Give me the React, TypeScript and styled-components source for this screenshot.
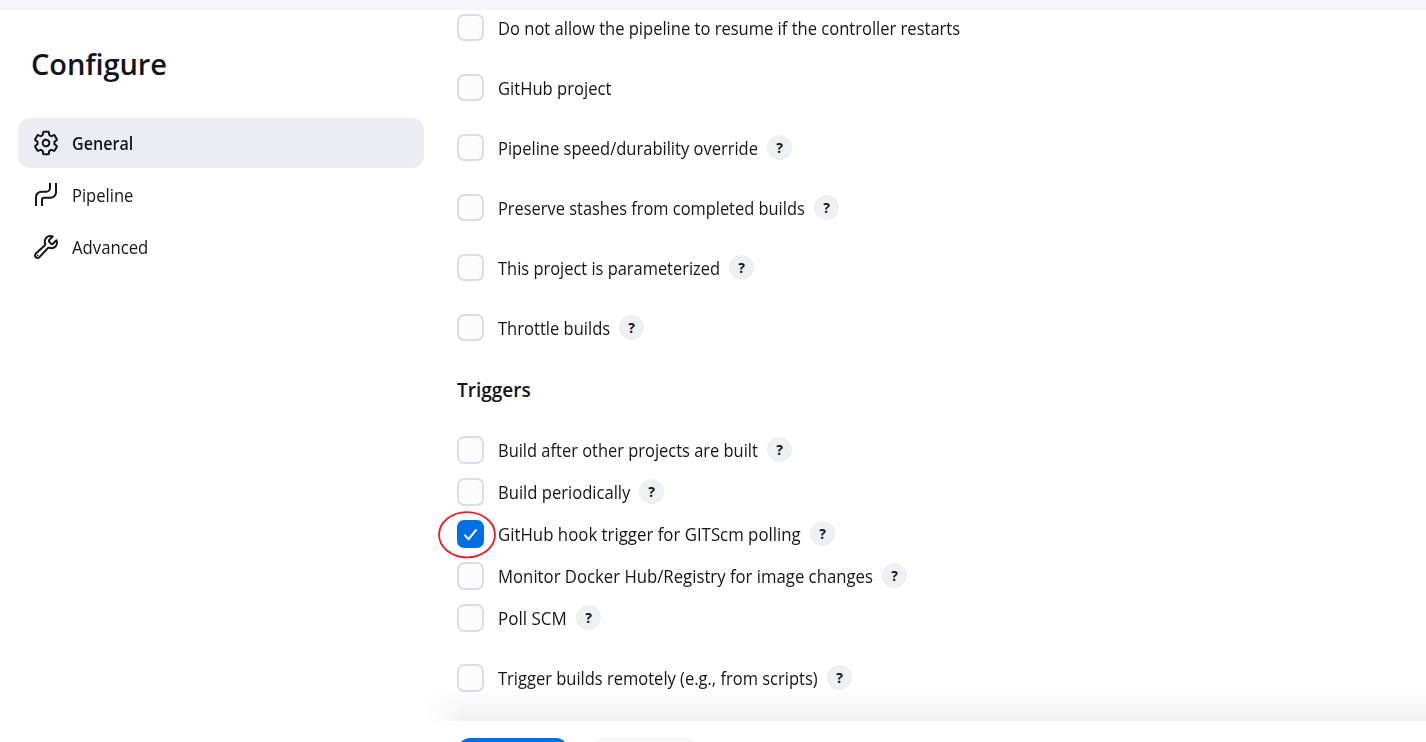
import React from "react";
import styled, { createGlobalStyle } from "styled-components";
import { IoSettingsOutline, IoBuildOutline } from "react-icons/io5";

const GlobalStyle = createGlobalStyle`
  * { box-sizing: border-box; }
  body {
    margin: 0;
    background: #fff;
    color: #14141f;
    font-family: "Segoe UI", "Open Sans", "Noto Sans", sans-serif;
    font-size: 17.6px;
    overflow: hidden;
  }
`;

const Page = styled.div`
  position: relative;
  height: 742px;
  overflow: hidden;
  display: flex;
  flex-direction: column;
`;

const TopBar = styled.div`
  flex: none;
  height: 10px;
  background: #f5f5f8;
`;

const Columns = styled.div`
  flex: 1;
  min-height: 0;
  display: flex;
`;

const Sidebar = styled.aside`
  width: 424px;
  padding: 34px 0 0 18px;
`;

const Title = styled.h1`
  margin: 0 0 34px 13px;
  font-size: 29px;
  line-height: 40px;
  font-weight: 600;
  letter-spacing: -0.1px;
`;

const Nav = styled.nav`
  display: flex;
  flex-direction: column;
  gap: 2px;
`;

const NavItem = styled.a<{ $active?: boolean }>`
  display: flex;
  align-items: center;
  gap: 12px;
  height: 50px;
  padding: 0 14px;
  border-radius: 12px;
  background: ${(p) => (p.$active ? "#ecedf3" : "transparent")};
  font-weight: ${(p) => (p.$active ? 600 : 400)};

  svg {
    flex: none;
    width: 28px;
    height: 28px;
  }
`;

const GearIcon = styled(IoSettingsOutline)`
  padding: 0.5px;
  path { stroke-width: 38px; }
`;

const WrenchIcon = styled(IoBuildOutline)`
  padding: 0.5px;
  path { stroke-width: 38px; }
`;

const NavText = styled.span<{ $condense: number }>`
  transform: scaleX(${(p) => p.$condense});
  transform-origin: left center;
`;

const Form = styled.main`
  flex: 1;
  padding: 4px 0 0 33px;
`;

const Row = styled.label<{ $gap: number }>`
  display: flex;
  align-items: flex-start;
  height: 28px;
  margin-bottom: ${(p) => p.$gap}px;
`;

const Box = styled.span<{ $checked?: boolean; $tall?: boolean }>`
  flex: none;
  display: flex;
  align-items: center;
  justify-content: center;
  width: 27px;
  height: ${(p) => (p.$tall ? 28 : 27)}px;
  border: 2px solid ${(p) => (p.$checked ? "#006fe6" : "#d6dee8")};
  border-radius: 7px;
  background: ${(p) => (p.$checked ? "#006fe6" : "#fcfcfd")};
`;

const Text = styled.span<{ $width: number; $condense: number }>`
  flex: none;
  width: ${(p) => p.$width}px;
  margin: 1px 9px 0 14px;
  line-height: 27px;
  white-space: nowrap;
  transform: scaleX(${(p) => p.$condense});
  transform-origin: left center;
`;

const Help = styled.span`
  display: flex;
  align-items: center;
  justify-content: center;
  width: 25px;
  height: 25px;
  margin-top: 1px;
  border: 1px solid #e9edf1;
  border-radius: 50%;
  background: #eef1f4;
  font-size: 14px;
  font-weight: 700;
`;

const Section = styled.h2`
  margin: 34px 0 32px;
  font-size: 19px;
  line-height: 28px;
  font-weight: 600;
`;

const Ring = styled.svg`
  position: absolute;
  left: 437px;
  top: 510px;
`;

const Footer = styled.footer`
  position: absolute;
  left: 424px;
  right: 0;
  bottom: 0;
  height: 21px;
  padding: 17px 0 0 34px;
  display: flex;
  gap: 22px;
  background: #fff;
`;

const Fade = styled.div`
  position: absolute;
  left: 424px;
  right: 0;
  bottom: 21px;
  height: 36px;
  background: linear-gradient(rgba(0, 0, 0, 0), rgba(0, 0, 0, 0.055));
  mask-image: linear-gradient(90deg, transparent, #000 40px);
`;

const Button = styled.button<{ $primary?: boolean }>`
  flex: none;
  width: 110px;
  height: 38px;
  border: 0;
  border-radius: 12px;
  background: ${(p) => (p.$primary ? "#006fe6" : "#f7f7f8")};
`;

const PipelineIcon = () => (
  <svg viewBox="0 0 28 28" fill="none" stroke="currentColor" strokeWidth="2">
    <path d="M4 25V16.2a5.5 5.5 0 0 1 5.5-5.5h4.8A3.7 3.7 0 0 0 18 7V2" />
    <path d="M10 25v-6.1a2.2 2.2 0 0 1 2.2-2.2h6.3a5.5 5.5 0 0 0 5.5-5.5V2" />
  </svg>
);

type Option = { text: string; width: number; condense: number; help?: boolean; checked?: boolean; gap: number };

const options: Option[] = [
  { text: "Do not allow the pipeline to resume if the controller restarts", width: 462, condense: 0.94, gap: 32 },
  { text: "GitHub project", width: 114, condense: 0.943, gap: 32 },
  { text: "Pipeline speed/durability override", width: 260, condense: 0.939, help: true, gap: 32 },
  { text: "Preserve stashes from completed builds", width: 307, condense: 0.933, help: true, gap: 32 },
  { text: "This project is parameterized", width: 222, condense: 0.934, help: true, gap: 32 },
  { text: "Throttle builds", width: 112, condense: 0.941, help: true, gap: 32 },
];

const triggers: Option[] = [
  { text: "Build after other projects are built", width: 260, condense: 0.935, help: true, gap: 14 },
  { text: "Build periodically", width: 132, condense: 0.943, help: true, gap: 14 },
  { text: "GitHub hook trigger for GITScm polling", width: 303, condense: 0.956, help: true, checked: true, gap: 14 },
  { text: "Monitor Docker Hub/Registry for image changes", width: 375, condense: 0.951, help: true, gap: 14 },
  { text: "Poll SCM", width: 69, condense: 0.965, help: true, gap: 32 },
  { text: "Trigger builds remotely (e.g., from scripts)", width: 320, condense: 0.938, help: true, gap: 32 },
];

const OptionRow = ({ option, tall }: { option: Option; tall?: boolean }) => (
  <Row $gap={option.gap}>
    <Box $checked={option.checked} $tall={tall}>
      {option.checked && (
        <svg width="15" height="13" viewBox="0 0 15 13" fill="none" stroke="#fff" strokeWidth="2" strokeLinecap="round" strokeLinejoin="round">
          <path d="M2 7.4l3.6 3.8L13 2" />
        </svg>
      )}
    </Box>
    <Text $width={option.width} $condense={option.condense}>{option.text}</Text>
    {option.help && <Help>?</Help>}
  </Row>
);

export default function App() {
  return (
    <>
      <GlobalStyle />
      <Page>
        <TopBar />
        <Columns>
          <Sidebar>
            <Title>Configure</Title>
            <Nav>
              <NavItem $active><GearIcon /><NavText $condense={0.915}>General</NavText></NavItem>
              <NavItem><PipelineIcon /><NavText $condense={0.94}>Pipeline</NavText></NavItem>
              <NavItem><WrenchIcon /><NavText $condense={0.95}>Advanced</NavText></NavItem>
            </Nav>
          </Sidebar>
          <Form>
            {options.map((o) => <OptionRow key={o.text} option={o} />)}
            <Section>Triggers</Section>
            {triggers.map((o) => <OptionRow key={o.text} option={o} tall />)}
          </Form>
        </Columns>
        <Ring width="60" height="50" viewBox="0 0 60 50" fill="none" stroke="#ed1c24" strokeWidth="1.8">
          <ellipse cx="30" cy="24.8" rx="28" ry="22.6" />
        </Ring>
        <Fade />
        <Footer>
          <Button $primary aria-label="Save" />
          <Button aria-label="Apply" />
        </Footer>
      </Page>
    </>
  );
}
